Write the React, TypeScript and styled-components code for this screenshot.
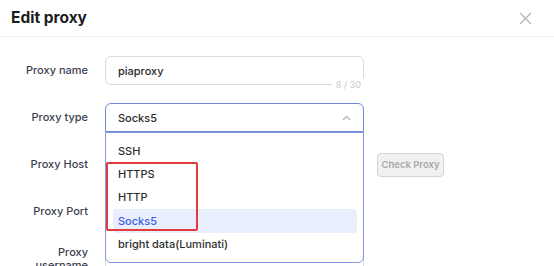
import React from 'react'
import styled, { createGlobalStyle } from 'styled-components'

const GlobalStyle = createGlobalStyle`
  html, body {
    margin: 0;
    padding: 0;
    background: #fff;
    font-family: Inter, "Noto Sans", sans-serif;
    overflow: hidden;
  }
`

const Modal = styled.div`
  width: 554px;
  height: 266px;
  background: #fff;
  overflow: hidden;
`

const Header = styled.div`
  height: 36px;
  display: flex;
  align-items: center;
  justify-content: space-between;
  padding: 0 22px 0 11px;
  border-bottom: 1px solid #efefef;
`

const Title = styled.h2`
  margin: 0;
  margin-top: -1px;
  font-size: 15.5px;
  font-weight: 700;
  color: #1c1c1c;
`

const CloseButton = styled.button`
  border: 0;
  background: none;
  padding: 0;
  display: flex;
  color: #b3b3b3;
  cursor: pointer;
`

const Form = styled.div`
  padding-top: 19px;
  display: flex;
  flex-direction: column;
  gap: 18px;
`

const Row = styled.div`
  display: flex;
  align-items: center;
  gap: 17px;
  height: 29px;
`

const Label = styled.label`
  width: 88px;
  display: flex;
  justify-content: flex-end;
  text-align: right;
  font-size: 11px;
  font-weight: 500;
  line-height: 13px;
  color: #3c4150;
  span {
    max-width: 64px;
  }
`

const Field = styled.div<{ $focused?: boolean }>`
  position: relative;
  box-sizing: border-box;
  width: 259px;
  height: 29px;
  border: 1px solid ${p => (p.$focused ? '#6f86d9' : '#d9d9d9')};
  border-radius: ${p => (p.$focused ? '6px 6px 0 0' : '6px')};
  display: flex;
  align-items: center;
  padding: 0 12px;
  font-size: 11px;
  font-weight: 500;
  color: #2b2b2b;
`

const Counter = styled.span`
  position: absolute;
  right: -2px;
  bottom: -7px;
  padding: 0 4px;
  background: #fff;
  font-size: 9px;
  line-height: 13px;
  color: #cfcfcf;
`

const Chevron = styled.span`
  margin-left: auto;
  display: flex;
  color: #b9b9b9;
`

const Menu = styled.div`
  position: absolute;
  left: -1px;
  top: 28px;
  z-index: 2;
  box-sizing: border-box;
  width: 259px;
  height: 131px;
  padding: 6px 6px 6px 7px;
  background: #fff;
  border: 1px solid #8398e0;
  border-radius: 0 0 6px 6px;
`

const Option = styled.div<{ $active?: boolean }>`
  height: 23.4px;
  display: flex;
  align-items: center;
  padding-left: 5px;
  border-radius: 3px;
  font-size: 11px;
  font-weight: 500;
  color: ${p => (p.$active ? '#3f5fe0' : '#2e2e2e')};
  background: ${p => (p.$active ? '#e9eefd' : 'transparent')};
`

const Highlight = styled.div`
  position: absolute;
  left: 0;
  top: 29px;
  width: 92px;
  height: 69px;
  box-sizing: border-box;
  border: 2px solid #e23b3b;
  border-radius: 2px;
  pointer-events: none;
`

const CheckButton = styled.button`
  box-sizing: border-box;
  width: 67px;
  height: 24px;
  padding: 0;
  border: 1px solid #d4d4d4;
  border-radius: 4px;
  background: #f1f1f1;
  font-family: inherit;
  font-size: 9.5px;
  font-weight: 600;
  color: #a8a8a8;
  margin-left: -4px;
`

const options = ['SSH', 'HTTPS', 'HTTP', 'Socks5', 'bright data(Luminati)']

export default function App() {
  return (
    <>
      <GlobalStyle />
      <Modal>
        <Header>
          <Title>Edit proxy</Title>
          <CloseButton aria-label="close">
            <svg width="13" height="13" viewBox="0 0 13 13" fill="none" stroke="currentColor" strokeWidth="1.3">
              <path d="M1 1L12 12M12 1L1 12" />
            </svg>
          </CloseButton>
        </Header>
        <Form>
          <Row>
            <Label><span>Proxy name</span></Label>
            <Field>
              piaproxy
              <Counter>8 / 30</Counter>
            </Field>
          </Row>
          <Row style={{ position: 'relative', zIndex: 2 }}>
            <Label><span>Proxy type</span></Label>
            <Field $focused>
              Socks5
              <Chevron>
                <svg width="9" height="6" viewBox="0 0 9 6" fill="none" stroke="currentColor" strokeWidth="1.4">
                  <path d="M1 5L4.5 1.5L8 5" />
                </svg>
              </Chevron>
              <Menu>
                {options.map(o => (
                  <Option key={o} $active={o === 'Socks5'}>{o}</Option>
                ))}
                <Highlight />
              </Menu>
            </Field>
          </Row>
          <Row>
            <Label><span>Proxy Host</span></Label>
            <Field />
            <CheckButton>Check Proxy</CheckButton>
          </Row>
          <Row>
            <Label><span>Proxy Port</span></Label>
            <Field />
          </Row>
          <Row>
            <Label><span>Proxy username</span></Label>
            <Field />
          </Row>
        </Form>
      </Modal>
    </>
  )
}
